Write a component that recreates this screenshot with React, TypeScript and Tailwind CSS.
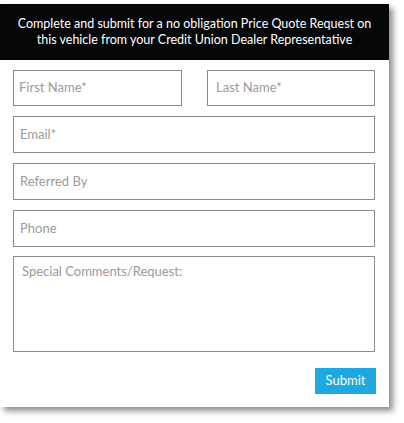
export default function App() {
  const fields = ["Email*", "Referred By", "Phone"];

  return (
    <div className="w-[404px] h-[423px] bg-white pt-[4px]" style={{ fontFamily: "Lato, 'Open Sans', sans-serif" }}>
      <div className="w-[389px] h-[403px] bg-white shadow-[4px_4px_6px_rgba(0,0,0,0.45)]">
        {/* Header */}
        <div className="h-[56px] bg-[#050708] flex items-center justify-center px-3">
          <p className="text-white text-[12.5px] leading-[16px] text-center">
            Complete and submit for a no obligation Price Quote Request on this vehicle from your Credit Union Dealer Representative
          </p>
        </div>

        <form className="px-[13px] pt-[10px] flex flex-col">
          <div className="flex gap-[25px]">
            <div className="w-[169px] h-[36px] border border-[#8a8a8a] flex items-center px-[5px] text-[13px] text-[#9a9a9a]">
              First Name*
            </div>
            <div className="w-[168px] h-[36px] border border-[#8a8a8a] flex items-center px-[8px] text-[13px] text-[#9a9a9a]">
              Last Name*
            </div>
          </div>

          {fields.map((f) => (
            <div
              key={f}
              className="mt-[10px] w-[362px] h-[37px] border border-[#8a8a8a] flex items-center px-[6px] text-[13px] text-[#9a9a9a]"
            >
              {f}
            </div>
          ))}

          <div className="mt-[9px] w-[362px] h-[96px] border border-[#8a8a8a] px-[8px] pt-[5px] text-[13px] text-[#9a9a9a]">
            Special Comments/Request:
          </div>

          <div className="flex justify-end mt-[16px]">
            <button
              type="button"
              className="w-[61px] h-[26px] bg-[#1fa8e0] text-white text-[13px] flex items-center justify-center"
            >
              Submit
            </button>
          </div>
        </form>
      </div>
    </div>
  );
}
